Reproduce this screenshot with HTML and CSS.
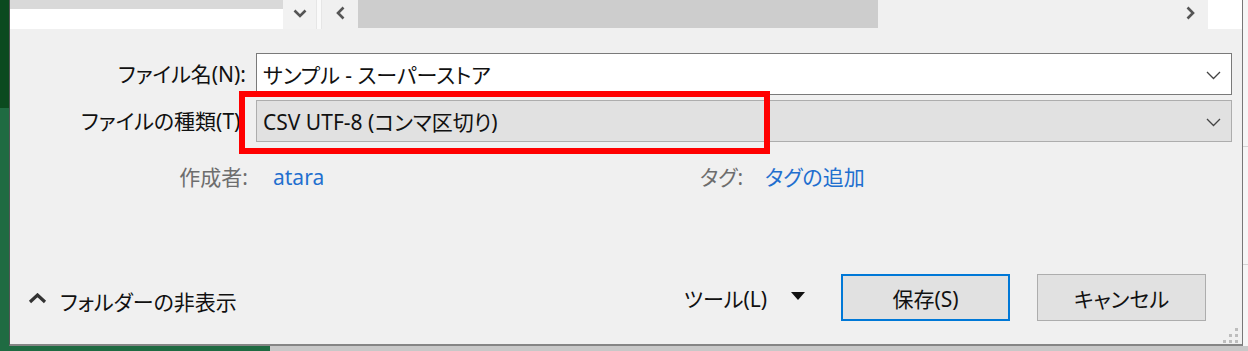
FILE: index.html
```html
<!DOCTYPE html>
<html lang="ja">
<head>
    <meta charset="UTF-8">
    <meta name="viewport" content="width=device-width, initial-scale=1.0">
    <title>名前を付けて保存</title>
    <link rel="stylesheet" href="styles.css">
</head>
<body>
    <div class="dialog">
        <div class="browser-strip">
            <div class="file-list"></div>
            <div class="view-button">
                <svg width="14" height="9" viewBox="0 0 14 9"><path d="M1.5 1.5 L7 7 L12.5 1.5" stroke="#555" stroke-width="2.6" fill="none"/></svg>
            </div>
            <div class="strip-gap"></div>
            <div class="hscroll">
                <div class="scroll-arrow">
                    <svg width="9" height="14" viewBox="0 0 9 14"><path d="M7.5 1.5 L2 7 L7.5 12.5" stroke="#555" stroke-width="2.6" fill="none"/></svg>
                </div>
                <div class="scroll-thumb"></div>
                <div class="scroll-track"></div>
                <div class="scroll-arrow">
                    <svg width="9" height="14" viewBox="0 0 9 14"><path d="M1.5 1.5 L7 7 L1.5 12.5" stroke="#555" stroke-width="2.6" fill="none"/></svg>
                </div>
            </div>
            <div class="strip-corner"></div>
        </div>

        <div class="save-form">
            <div class="field-label">ファイル名(N):</div>
            <div class="combo combo-edit">
                <span class="combo-text">サンプル - スーパーストア</span>
                <svg class="combo-arrow" width="15" height="9" viewBox="0 0 15 9"><path d="M1 1 L7.5 7.5 L14 1" stroke="#444" stroke-width="1.3" fill="none"/></svg>
            </div>
            <div class="field-label">ファイルの種類(T):</div>
            <div class="combo combo-select">
                <span class="combo-text">CSV UTF-8 (コンマ区切り)</span>
                <svg class="combo-arrow" width="15" height="9" viewBox="0 0 15 9"><path d="M1 1 L7.5 7.5 L14 1" stroke="#444" stroke-width="1.3" fill="none"/></svg>
            </div>
        </div>

        <div class="meta">
            <div class="meta-item author">
                <span class="meta-label">作成者:</span>
                <span class="meta-value">atara</span>
            </div>
            <div class="meta-item tags">
                <span class="meta-label">タグ:</span>
                <span class="meta-value">タグの追加</span>
            </div>
        </div>

        <div class="footer">
            <div class="folder-toggle">
                <svg width="19" height="11" viewBox="0 0 19 11"><path d="M2 9 L9.5 2 L17 9" stroke="#333" stroke-width="3.2" fill="none"/></svg>
                <span>フォルダーの非表示</span>
            </div>
            <div class="actions">
                <div class="tools">
                    <span>ツール(L)</span>
                    <svg width="14" height="8" viewBox="0 0 14 8"><polygon points="0,0 14,0 7,8" fill="#111"/></svg>
                </div>
                <button class="btn btn-default">保存(S)</button>
                <button class="btn">キャンセル</button>
            </div>
        </div>

        <!-- annotation drawn over the file type box -->
        <div class="highlight"></div>
        <div class="grip">
            <i></i><i></i><i></i><i></i><i></i><i></i>
        </div>
    </div>
    <div class="sheet-edge"></div>
</body>
</html>
```

FILE: styles.css
```css
body {
    margin: 0;
    height: 351px;
    overflow: hidden;
    display: flex;
    align-items: flex-start;
    font-family: "Noto Sans", "Noto Sans CJK JP", sans-serif;
    font-size: 21px;
    font-feature-settings: "palt";
    color: #111;
    background:
        linear-gradient(#0b4a1f, #0b4a1f) 0 0 / 9px 108px no-repeat,
        linear-gradient(#1f6b42, #1f6b42) 0 0 / 270px 100% no-repeat,
        #c8c8c8;
}
.dialog {
    position: relative;
    box-sizing: border-box;
    margin-left: 9px;
    width: 1234px;
    height: 346px;
    background: #f0f0f0;
    border-left: 1px solid #555;
    border-right: 1px solid #777;
    border-bottom: 2px solid #858585;
    display: flex;
    flex-direction: column;
}
.browser-strip {
    display: flex;
    height: 29px;
}
.file-list {
    width: 273px;
    background: #fff;
    border-top: 9px solid #d9d9d9;
    box-sizing: border-box;
}
.view-button {
    width: 33px;
    background: #f2f2f2;
    display: flex;
    align-items: center;
    justify-content: center;
    padding-bottom: 3px;
    box-sizing: border-box;
}
.strip-gap {
    width: 6px;
    background: #fafafa;
    border-left: 1px solid #e6e6e6;
    border-right: 1px solid #e6e6e6;
    box-sizing: border-box;
}
.hscroll {
    flex: 1;
    display: flex;
    background: #f0f0f0;
}
.scroll-arrow {
    width: 36px;
    display: flex;
    align-items: center;
    justify-content: center;
    padding-bottom: 3px;
    box-sizing: border-box;
}
.scroll-thumb {
    width: 520px;
    height: 28px;
    background: #cdcdcd;
}
.scroll-track {
    flex: 1;
}
.strip-corner {
    width: 34px;
    background: #fff;
}
.save-form {
    display: grid;
    grid-template-columns: 236px 1fr;
    column-gap: 10px;
    row-gap: 5px;
    margin-top: 24px;
    padding-right: 10px;
}
.field-label {
    text-align: right;
    line-height: 42px;
    white-space: nowrap;
}
.combo {
    height: 42px;
    box-sizing: border-box;
    display: flex;
    align-items: center;
    padding: 0 10px 0 6px;
}
.combo-edit {
    background: #fff;
    border: 1px solid #7a7a7a;
}
.combo-select {
    background: #e1e1e1;
    border: 1px solid #adadad;
}
.combo-text {
    flex: 1;
}
.combo-arrow {
    margin-top: 2px;
}
.meta {
    display: flex;
    margin-top: 21px;
    line-height: 28px;
}
.meta-item {
    display: flex;
}
.author {
    width: 690px;
}
.author .meta-label {
    width: 238px;
    text-align: right;
}
.author .meta-value {
    margin-left: 25px;
}
.tags .meta-value {
    margin-left: 22px;
}
.meta-label {
    color: #6d6d6d;
}
.meta-value {
    color: #1f6fcf;
}
.footer {
    margin-top: auto;
    display: flex;
    align-items: center;
    justify-content: space-between;
    padding: 0 36px 23px 18px;
}
.folder-toggle {
    display: flex;
    align-items: center;
    gap: 13px;
    margin-top: 6px;
}
.folder-toggle svg {
    margin-top: -4px;
}
.actions {
    display: flex;
    align-items: center;
}
.tools {
    display: flex;
    align-items: center;
    gap: 24px;
    margin-right: 36px;
}
.tools svg {
    margin-top: -4px;
}
.btn {
    width: 169px;
    height: 47px;
    box-sizing: border-box;
    font: inherit;
    color: #111;
    background: #e1e1e1;
    border: 1px solid #adadad;
    padding: 0;
}
.btn + .btn {
    margin-left: 27px;
}
.btn-default {
    border: 2px solid #0078d7;
}
.highlight {
    position: absolute;
    left: 229px;
    top: 91px;
    width: 531px;
    height: 63px;
    box-sizing: border-box;
    border: 6px solid #ff0000;
}
.grip {
    position: absolute;
    right: 4px;
    bottom: 1px;
    width: 15px;
    height: 15px;
    display: grid;
    grid-template-columns: repeat(3, 3px);
    grid-template-rows: repeat(3, 3px);
    gap: 3px;
}
.grip i {
    background: #bdbdbd;
}
.grip i:nth-child(1) { grid-area: 1 / 3; }
.grip i:nth-child(2) { grid-area: 2 / 2; }
.grip i:nth-child(3) { grid-area: 2 / 3; }
.grip i:nth-child(4) { grid-area: 3 / 1; }
.grip i:nth-child(5) { grid-area: 3 / 2; }
.grip i:nth-child(6) { grid-area: 3 / 3; }
.sheet-edge {
    flex: 1;
    height: 351px;
    background:
        linear-gradient(#d4d4d4, #d4d4d4) 0 146px / 100% 1px no-repeat,
        linear-gradient(#d4d4d4, #d4d4d4) 0 264px / 100% 1px no-repeat,
        linear-gradient(#c8c8c8, #c8c8c8) 0 346px / 100% 5px no-repeat,
        #f6f6f6;
}
```
